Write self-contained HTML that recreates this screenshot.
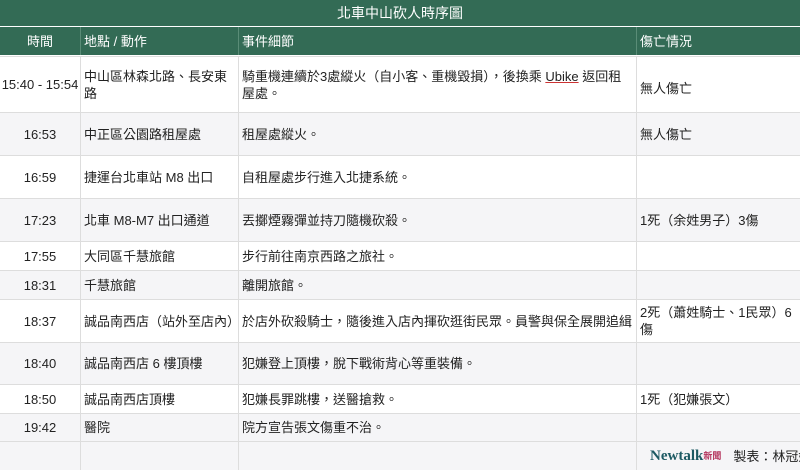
<!DOCTYPE html><html><head><meta charset="utf-8"><style>
body{margin:0;width:800px;height:469px;overflow:hidden;background:#fff;font-family:"Liberation Sans","Noto Sans CJK TC",sans-serif;font-size:13px;color:#222}
.t{position:absolute;left:0;top:0;width:800px;height:26px;background:#336b55;color:#fff;text-align:center;line-height:26px;font-size:14px}
.h{position:absolute;left:0;top:27px;width:800px;height:28px;background:#336b55;color:#fff}
.r{position:absolute;left:0;width:800px;border-top:1px solid #ddd}
.c{position:absolute;top:0;height:100%;display:flex;align-items:center;overflow:hidden;box-sizing:border-box;padding-left:3px;line-height:17px}
.c1{left:0;width:80px;justify-content:center;padding:0}
.c2{left:80px;width:158px;border-left:1px solid #ddd}
.c3{left:238px;width:398px;border-left:1px solid #ddd;white-space:nowrap}
.c4{left:636px;width:164px;border-left:1px solid #ddd}
.h .c{border-color:#5a8c77}
.g{background:#f5f5f7}
</style></head><body>
<div class="t">北車中山砍人時序圖</div>
<div class="h"><div class="c c1">時間</div><div class="c c2">地點 / 動作</div><div class="c c3">事件細節</div><div class="c c4">傷亡情況</div></div>
<div class="r" style="top:56px;height:55px"><div class="c c1">15:40 - 15:54</div><div class="c c2">中山區林森北路、長安東路</div><div class="c c3"><div>騎重機連續於3處縱火（自小客、重機毀損），後換乘 <u style="text-decoration-color:#c33">Ubike</u> 返回租<br>屋處。</div></div><div class="c c4" style="padding-top:8px">無人傷亡</div></div>
<div class="r g" style="top:112px;height:42px"><div class="c c1">16:53</div><div class="c c2">中正區公園路租屋處</div><div class="c c3">租屋處縱火。</div><div class="c c4">無人傷亡</div></div>
<div class="r" style="top:155px;height:42px"><div class="c c1">16:59</div><div class="c c2">捷運台北車站 M8 出口</div><div class="c c3">自租屋處步行進入北捷系統。</div><div class="c c4"></div></div>
<div class="r g" style="top:198px;height:42px"><div class="c c1">17:23</div><div class="c c2">北車 M8-M7 出口通道</div><div class="c c3">丟擲煙霧彈並持刀隨機砍殺。</div><div class="c c4">1死（余姓男子）3傷</div></div>
<div class="r" style="top:241px;height:28px"><div class="c c1">17:55</div><div class="c c2">大同區千慧旅館</div><div class="c c3">步行前往南京西路之旅社。</div><div class="c c4"></div></div>
<div class="r g" style="top:270px;height:28px"><div class="c c1">18:31</div><div class="c c2">千慧旅館</div><div class="c c3">離開旅館。</div><div class="c c4"></div></div>
<div class="r" style="top:299px;height:42px"><div class="c c1">18:37</div><div class="c c2" style="white-space:nowrap">誠品南西店（站外至店內）</div><div class="c c3">於店外砍殺騎士，隨後進入店內揮砍逛街民眾。員警與保全展開追緝。</div><div class="c c4">2死（蕭姓騎士、1民眾）6傷</div></div>
<div class="r g" style="top:342px;height:41px"><div class="c c1">18:40</div><div class="c c2">誠品南西店 6 樓頂樓</div><div class="c c3">犯嫌登上頂樓，脫下戰術背心等重裝備。</div><div class="c c4"></div></div>
<div class="r" style="top:384px;height:28px"><div class="c c1">18:50</div><div class="c c2">誠品南西店頂樓</div><div class="c c3">犯嫌長罪跳樓，送醫搶救。</div><div class="c c4">1死（犯嫌張文）</div></div>
<div class="r g" style="top:413px;height:27px"><div class="c c1">19:42</div><div class="c c2">醫院</div><div class="c c3">院方宣告張文傷重不治。</div><div class="c c4"></div></div>
<div class="r g" style="top:441px;height:28px"><div class="c c1"></div><div class="c c2"></div><div class="c c3"></div><div class="c c4" style="white-space:nowrap;padding-left:13px"><b style="font-family:'Liberation Serif',serif;color:#1d5a63;font-size:15px">Newtalk</b><b style="color:#b3305a;font-size:9px;margin-right:12px">新聞</b>製表：林冠妤</div></div>
</body></html>
